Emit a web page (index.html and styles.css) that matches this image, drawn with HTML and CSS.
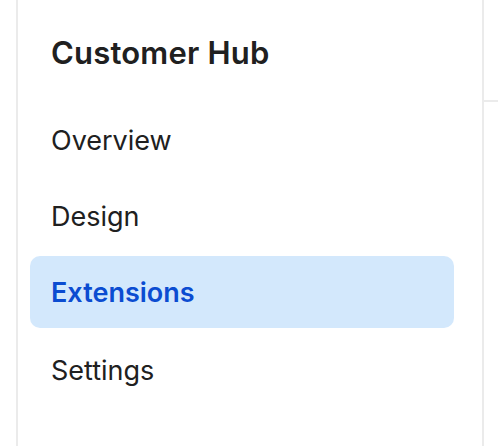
FILE: index.html
```html
<!DOCTYPE html>
<html lang="en">
<head>
    <meta charset="UTF-8">
    <meta name="viewport" content="width=device-width, initial-scale=1.0">
    <title>Customer Hub</title>
    <link rel="stylesheet" href="styles.css">
</head>
<body>

<div class="layout">
    <aside class="sidebar">
        <h2 class="sidebar-title">Customer Hub</h2>
        <nav class="nav">
            <a href="#" class="nav-item">Overview</a>
            <a href="#" class="nav-item">Design</a>
            <a href="#" class="nav-item active">Extensions</a>
            <a href="#" class="nav-item">Settings</a>
        </nav>
    </aside>
    <main class="content">
        <div class="content-header"></div>
    </main>
</div>

</body>
</html>
```

FILE: styles.css
```css
* {
    box-sizing: border-box;
}

body {
    font-family: 'Inter', 'Noto Sans', sans-serif;
    margin: 0;
    padding: 0;
    background-color: #ffffff;
    color: #202020;
}

.layout {
    display: flex;
    min-height: 100vh;
    padding-left: 16px;
}

.sidebar {
    width: 468px;
    flex-shrink: 0;
    border-left: 2px solid #ebebeb;
    border-right: 2px solid #ebebeb;
    padding: 35px 28px 0 12px;
}

.sidebar-title {
    margin: 0 0 33px 21px;
    font-size: 31px;
    line-height: 36px;
    font-weight: 600;
    letter-spacing: 0.2px;
}

.nav {
    display: flex;
    flex-direction: column;
    gap: 4px;
}

.nav-item {
    display: flex;
    align-items: center;
    height: 72px;
    padding-left: 21px;
    border-radius: 10px;
    font-size: 27px;
    text-decoration: none; /* no underline */
    color: inherit;
}

.nav-item:last-child {
    margin-top: 2px;
}

.nav-item.active {
    background: #d3e8fc;
    color: #0b4cd1;
    font-weight: 600;
}

.content {
    flex: 1;
}

.content-header {
    height: 102px;
    border-bottom: 2px solid #ebebeb;
}
```
